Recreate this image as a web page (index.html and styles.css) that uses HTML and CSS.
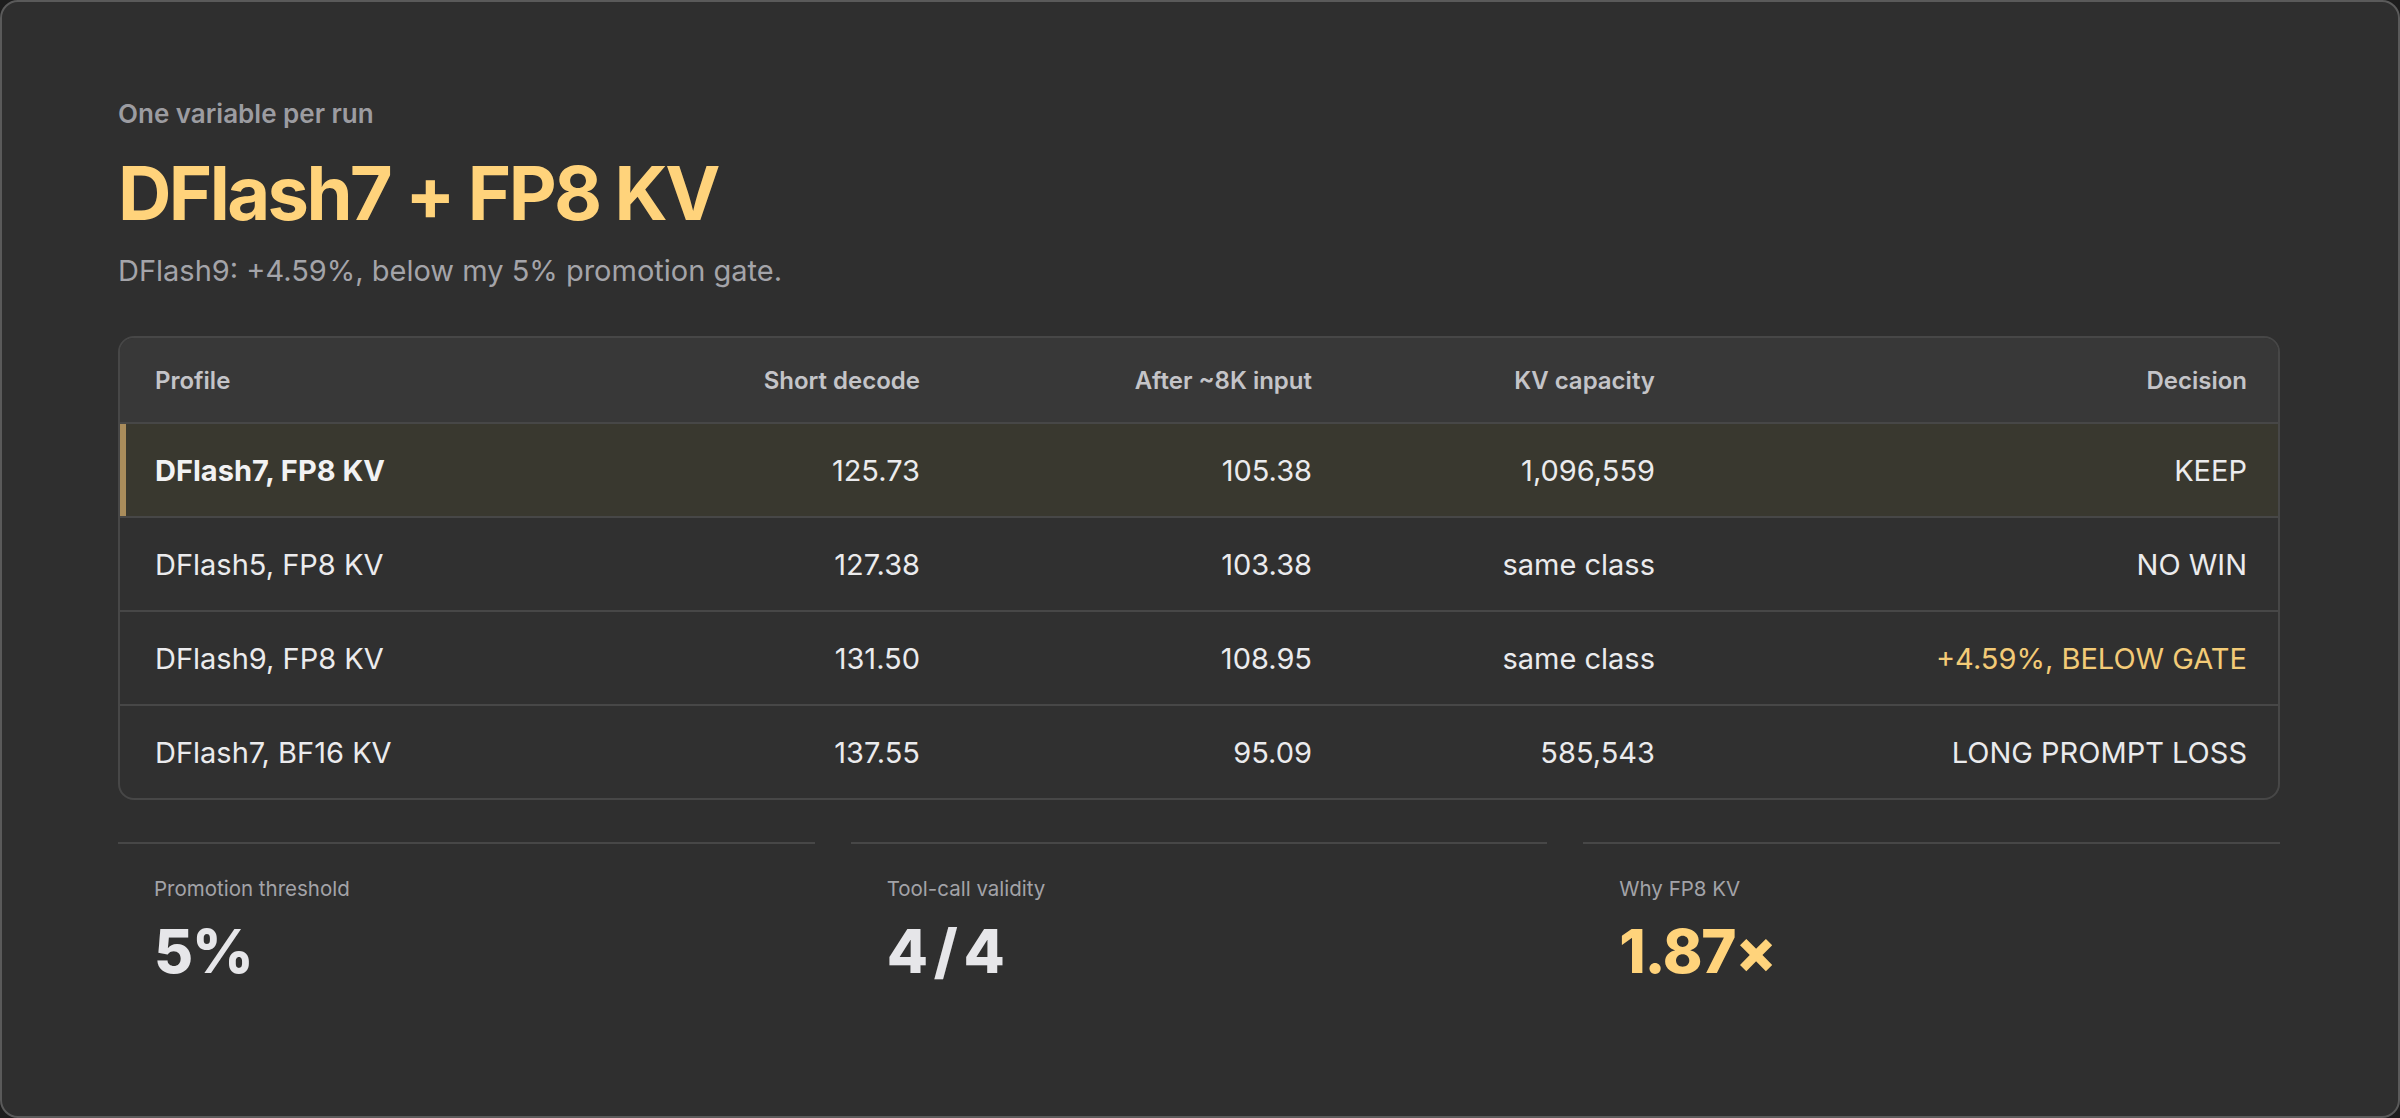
FILE: index.html
```html
<!DOCTYPE html>
<html lang="en">
<head>
<meta charset="utf-8">
<title>DFlash7 + FP8 KV</title>
<link rel="stylesheet" href="styles.css">
</head>
<body>
<main class="card">
  <header class="intro">
    <p class="eyebrow">One variable per run</p>
    <h1 class="title">DFlash7 + FP8 KV</h1>
    <p class="subtitle">DFlash9: +4.59%, below my 5% promotion gate.</p>
  </header>

  <section class="table">
    <div class="row head">
      <div class="cell">Profile</div>
      <div class="cell num">Short decode</div>
      <div class="cell num">After ~8K input</div>
      <div class="cell num">KV capacity</div>
      <div class="cell num">Decision</div>
    </div>
    <div class="row keep">
      <div class="cell name">DFlash7, FP8 KV</div>
      <div class="cell num">125.73</div>
      <div class="cell num">105.38</div>
      <div class="cell num">1,096,559</div>
      <div class="cell num">KEEP</div>
    </div>
    <div class="row">
      <div class="cell">DFlash5, FP8 KV</div>
      <div class="cell num">127.38</div>
      <div class="cell num">103.38</div>
      <div class="cell num">same class</div>
      <div class="cell num">NO WIN</div>
    </div>
    <div class="row">
      <div class="cell">DFlash9, FP8 KV</div>
      <div class="cell num">131.50</div>
      <div class="cell num">108.95</div>
      <div class="cell num">same class</div>
      <div class="cell num warn">+4.59%, BELOW GATE</div>
    </div>
    <div class="row last">
      <div class="cell">DFlash7, BF16 KV</div>
      <div class="cell num">137.55</div>
      <div class="cell num">95.09</div>
      <div class="cell num">585,543</div>
      <div class="cell num">LONG PROMPT LOSS</div>
    </div>
  </section>

  <section class="stats">
    <div class="stat">
      <div class="stat-label">Promotion threshold</div>
      <div class="stat-value">5%</div>
    </div>
    <div class="stat">
      <div class="stat-label">Tool-call validity</div>
      <div class="stat-value">4 / 4</div>
    </div>
    <div class="stat">
      <div class="stat-label">Why FP8 KV</div>
      <div class="stat-value accent">1.87×</div>
    </div>
  </section>
</main>
</body>
</html>
```

FILE: styles.css
```css
* { box-sizing: border-box; }

html, body {
  margin: 0;
  padding: 0;
  background: #1d1d1d;
}

body {
  font-family: Inter, "Noto Sans", "Liberation Sans", sans-serif;
  color: #e9e9eb;
}

.card {
  width: 2400px;
  height: 1118px;
  background: #2f2f2f;
  border: 2px solid #5a5a5a;
  border-radius: 18px;
  padding: 96px 118px 0 116px;
}

.intro p, .intro h1 { margin: 0; }

.eyebrow {
  font-size: 26px;
  line-height: 32px;
  font-weight: 600;
  color: #9c9ca1;
}

.title {
  margin-top: 21px !important;
  font-size: 74px;
  line-height: 84px;
  font-weight: 700;
  letter-spacing: -0.035em;
  color: #ffd37b;
}

.subtitle {
  margin-top: 18px !important;
  font-size: 29px;
  line-height: 36px;
  font-weight: 400;
  color: #a4a4a9;
}

.table {
  margin-top: 47px;
  border: 2px solid #474747;
  border-radius: 16px;
  overflow: hidden;
  background: #303030;
}

.row {
  display: grid;
  grid-template-columns: 418px 418px 392px 343px 1fr;
  height: 94px;
  border-bottom: 2px solid #474747;
  align-items: center;
  font-size: 29px;
  color: #ebebed;
}

.row.last { height: 92px; border-bottom: 0; }

.row.head {
  height: 86px;
  background: #383838;
  font-size: 24px;
  font-weight: 600;
  color: #c4c4c8;
}

.row.keep {
  background: #39382f;
  box-shadow: inset 6px 0 0 #a98c5b;
}

.name {
  font-weight: 700;
  color: #f2f2f3;
}

.cell {
  padding: 0 36px 0 35px;
  white-space: nowrap;
}

.cell:last-child { padding-right: 31px; }

.num { text-align: right; }

.warn { color: #f3cb77; }

.stats {
  margin-top: 42px;
  display: grid;
  grid-template-columns: repeat(3, 1fr);
  column-gap: 36px;
}

.stat {
  border-top: 2px solid #474747;
  padding: 31px 36px 0;
}

.stat-label {
  font-size: 20.5px;
  line-height: 28px;
  color: #a3a3a8;
}

.stat-value {
  margin-top: 18px;
  font-size: 60px;
  line-height: 60px;
  font-weight: 800;
  letter-spacing: -0.02em;
  word-spacing: -5px;
  color: #e6e6e9;
}

.stat-value.accent { color: #ffd37b; }
```
